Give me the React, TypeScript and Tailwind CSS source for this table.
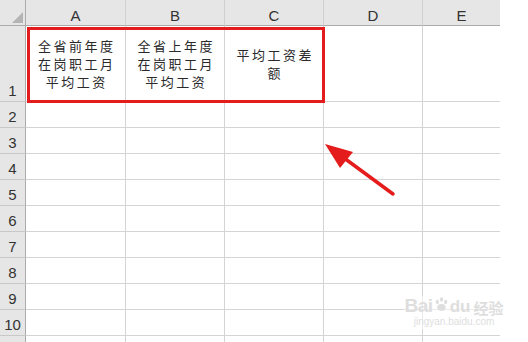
const cols = ['A', 'B', 'C', 'D', 'E'];
const rows = [2, 3, 4, 5, 6, 7, 8, 9, 10, 11];

const cjk = { fontFamily: '"Noto Sans CJK SC", "Noto Sans", sans-serif' };

const row1: string[][] = [
  ['全省前年度', '在岗职工月', '平均工资'],
  ['全省上年度', '在岗职工月', '平均工资'],
  ['平均工资差', '额'],
  [],
  [],
];

export default function App() {
  return (
    <div
      className="relative h-[342px] w-[528px] overflow-hidden bg-white text-[#444]"
      style={{ fontFamily: '"Liberation Sans", Arial, sans-serif' }}
    >
      <div className="grid w-[500px] grid-cols-[26px_100px_99px_99px_99px_77px]">
        {/* column headers */}
        <div className="relative h-[26px] border-b border-r border-[#ababab] bg-[#e6e6e6]">
          <div className="absolute bottom-[2px] right-[2px] h-0 w-0 border-b-[11px] border-l-[11px] border-b-[#b4b4b4] border-l-transparent" />
        </div>
        {cols.map((c) => (
          <div
            key={c}
            className={`flex h-[26px] items-end justify-center border-b border-b-[#ababab] bg-[#e6e6e6] pb-[1px] text-[15px] leading-none text-[#333] ${
              c === 'E' ? '' : 'border-r border-r-[#d0d0d0]'
            }`}
          >
            <span className="pb-[1px]">{c}</span>
          </div>
        ))}

        {/* row 1 */}
        <div className="flex h-[76px] items-end justify-center border-b border-r border-[#ababab] border-b-[#c8c8c8] bg-[#e6e6e6] pb-[3px] text-[15px] leading-none text-[#333]">
          1
        </div>
        {row1.map((lines, i) => (
          <div
            key={i}
            className={`flex h-[76px] flex-col items-center justify-center border-b border-[#d4d4d4] text-[13px] leading-[18px] tracking-[2.5px] text-[#2a2a2a] ${
              i === 4 ? '' : 'border-r'
            }`}
            style={cjk}
          >
            {lines.map((l, j) => (
              <span key={j} className="pl-[2.5px]">
                {l}
              </span>
            ))}
          </div>
        ))}

        {/* remaining rows */}
        {rows.map((r) => (
          <div key={r} className="contents">
            <div className="flex h-[26px] items-end justify-center border-b border-r border-[#ababab] border-b-[#c8c8c8] bg-[#e6e6e6] pb-[3px] text-[15px] leading-none text-[#333]">
              {r === 11 ? '' : r}
            </div>
            {cols.map((c) => (
              <div
                key={c}
                className={`h-[26px] border-b border-[#d4d4d4] ${c === 'E' ? '' : 'border-r'}`}
              />
            ))}
          </div>
        ))}
      </div>

      {/* red highlight box */}
      <div className="absolute left-[27px] top-[27px] h-[76px] w-[298px] border-[3px] border-[#e51c1c]" />

      {/* arrow */}
      <svg className="absolute left-0 top-0" width="528" height="342" viewBox="0 0 528 342">
        <line x1="393" y1="194" x2="340" y2="155" stroke="#e51c1c" strokeWidth="3.5" strokeLinecap="round" />
        <polygon points="325,144 353,152 340,168" fill="#e51c1c" />
      </svg>

      {/* watermark */}
      <div className="absolute left-[404px] top-[296px] flex w-[100px] flex-col items-center whitespace-nowrap bg-white/50 text-[#dedede]">
        <div className="flex items-end gap-[1px] leading-none">
          <span className="text-[19px] font-bold tracking-tight">Bai</span>
          <svg width="15" height="15" viewBox="0 0 18 18" className="mb-[3px]">
            <ellipse cx="4" cy="6" rx="2" ry="2.6" fill="#dedede" />
            <ellipse cx="9" cy="3" rx="2" ry="2.6" fill="#dedede" />
            <ellipse cx="14" cy="6" rx="2" ry="2.6" fill="#dedede" />
            <ellipse cx="9" cy="12.5" rx="5" ry="4" fill="#dedede" />
          </svg>
          <span className="text-[17px] font-bold">du</span>
          <span className="ml-[2px] text-[15px] font-bold" style={cjk}>
            经验
          </span>
        </div>
        <span className="text-[10px] leading-[14px]">jingyan.baidu.com</span>
      </div>
    </div>
  );
}
